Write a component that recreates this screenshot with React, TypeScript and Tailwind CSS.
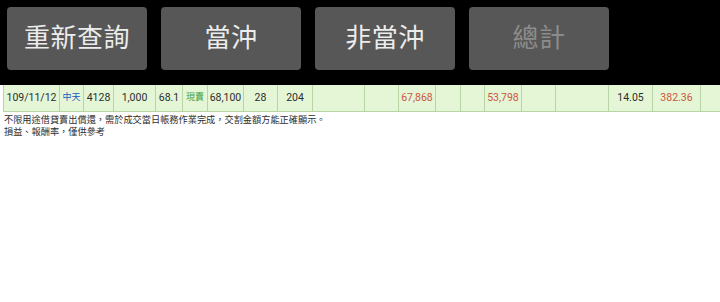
import React from 'react';

type Cell = { w: number; text?: string; tone?: 'blue' | 'green' | 'red' };

const cells: Cell[] = [
  { w: 56, text: '109/11/12' },
  { w: 24, text: '中天', tone: 'blue' },
  { w: 30, text: '4128' },
  { w: 42, text: '1,000' },
  { w: 27, text: '68.1' },
  { w: 25, text: '現賣', tone: 'green' },
  { w: 36, text: '68,100' },
  { w: 34, text: '28' },
  { w: 35, text: '204' },
  { w: 52 },
  { w: 34 },
  { w: 37, text: '67,868', tone: 'red' },
  { w: 25 },
  { w: 24 },
  { w: 37, text: '53,798', tone: 'red' },
  { w: 34 },
  { w: 53 },
  { w: 44, text: '14.05' },
  { w: 48, text: '382.36', tone: 'red' },
  { w: 40 },
];

const buttons = [
  { label: '重新查詢', disabled: false },
  { label: '當沖', disabled: false },
  { label: '非當沖', disabled: false },
  { label: '總計', disabled: true },
];

export default function App() {
  return (
    <div
      className="w-[720px] h-[302px] bg-white overflow-hidden"
      style={{ fontFamily: 'Roboto, "Noto Sans CJK TC", sans-serif' }}
    >
      {/* top button bar */}
      <div className="h-[85px] bg-black flex gap-[14px] px-[7px] pt-[7px]">
        {buttons.map((b) => (
          <button
            key={b.label}
            className={`w-[140px] h-[63px] rounded-[4px] bg-[#575757] text-[26px] tracking-[0.5px] ${
              b.disabled ? 'text-[#8c8c8c]' : 'text-[#ececec]'
            }`}
          >
            {b.label}
          </button>
        ))}
      </div>

      {/* data row */}
      <div className="flex pl-[3px]">
        <div className="flex h-[27px] bg-[#e4f6d6] border-l border-b border-[#b9d4a6]">
          {cells.map((c, i) => (
            <div
              key={i}
              style={{ width: c.w }}
              className={`shrink-0 border-r border-[#b9d4a6] flex items-center justify-center whitespace-nowrap ${
                c.tone === 'blue'
                  ? 'text-[9px] text-[#2557c4]'
                  : c.tone === 'green'
                  ? 'text-[9px] text-[#3f9a3a]'
                  : c.tone === 'red'
                  ? 'text-[10.5px] text-[#cd553d]'
                  : 'text-[10.5px] text-[#2e2e2e]'
              }`}
            >
              {c.text}
            </div>
          ))}
        </div>
      </div>

      {/* notes */}
      <div className="pl-[4px] pt-[2px] text-[9.2px] leading-[12px] text-[#2e2e2e]">
        <p>不限用途借貸賣出償還，需於成交當日帳務作業完成，交割金額方能正確顯示。</p>
        <p>損益、報酬率，僅供參考</p>
      </div>
    </div>
  );
}
